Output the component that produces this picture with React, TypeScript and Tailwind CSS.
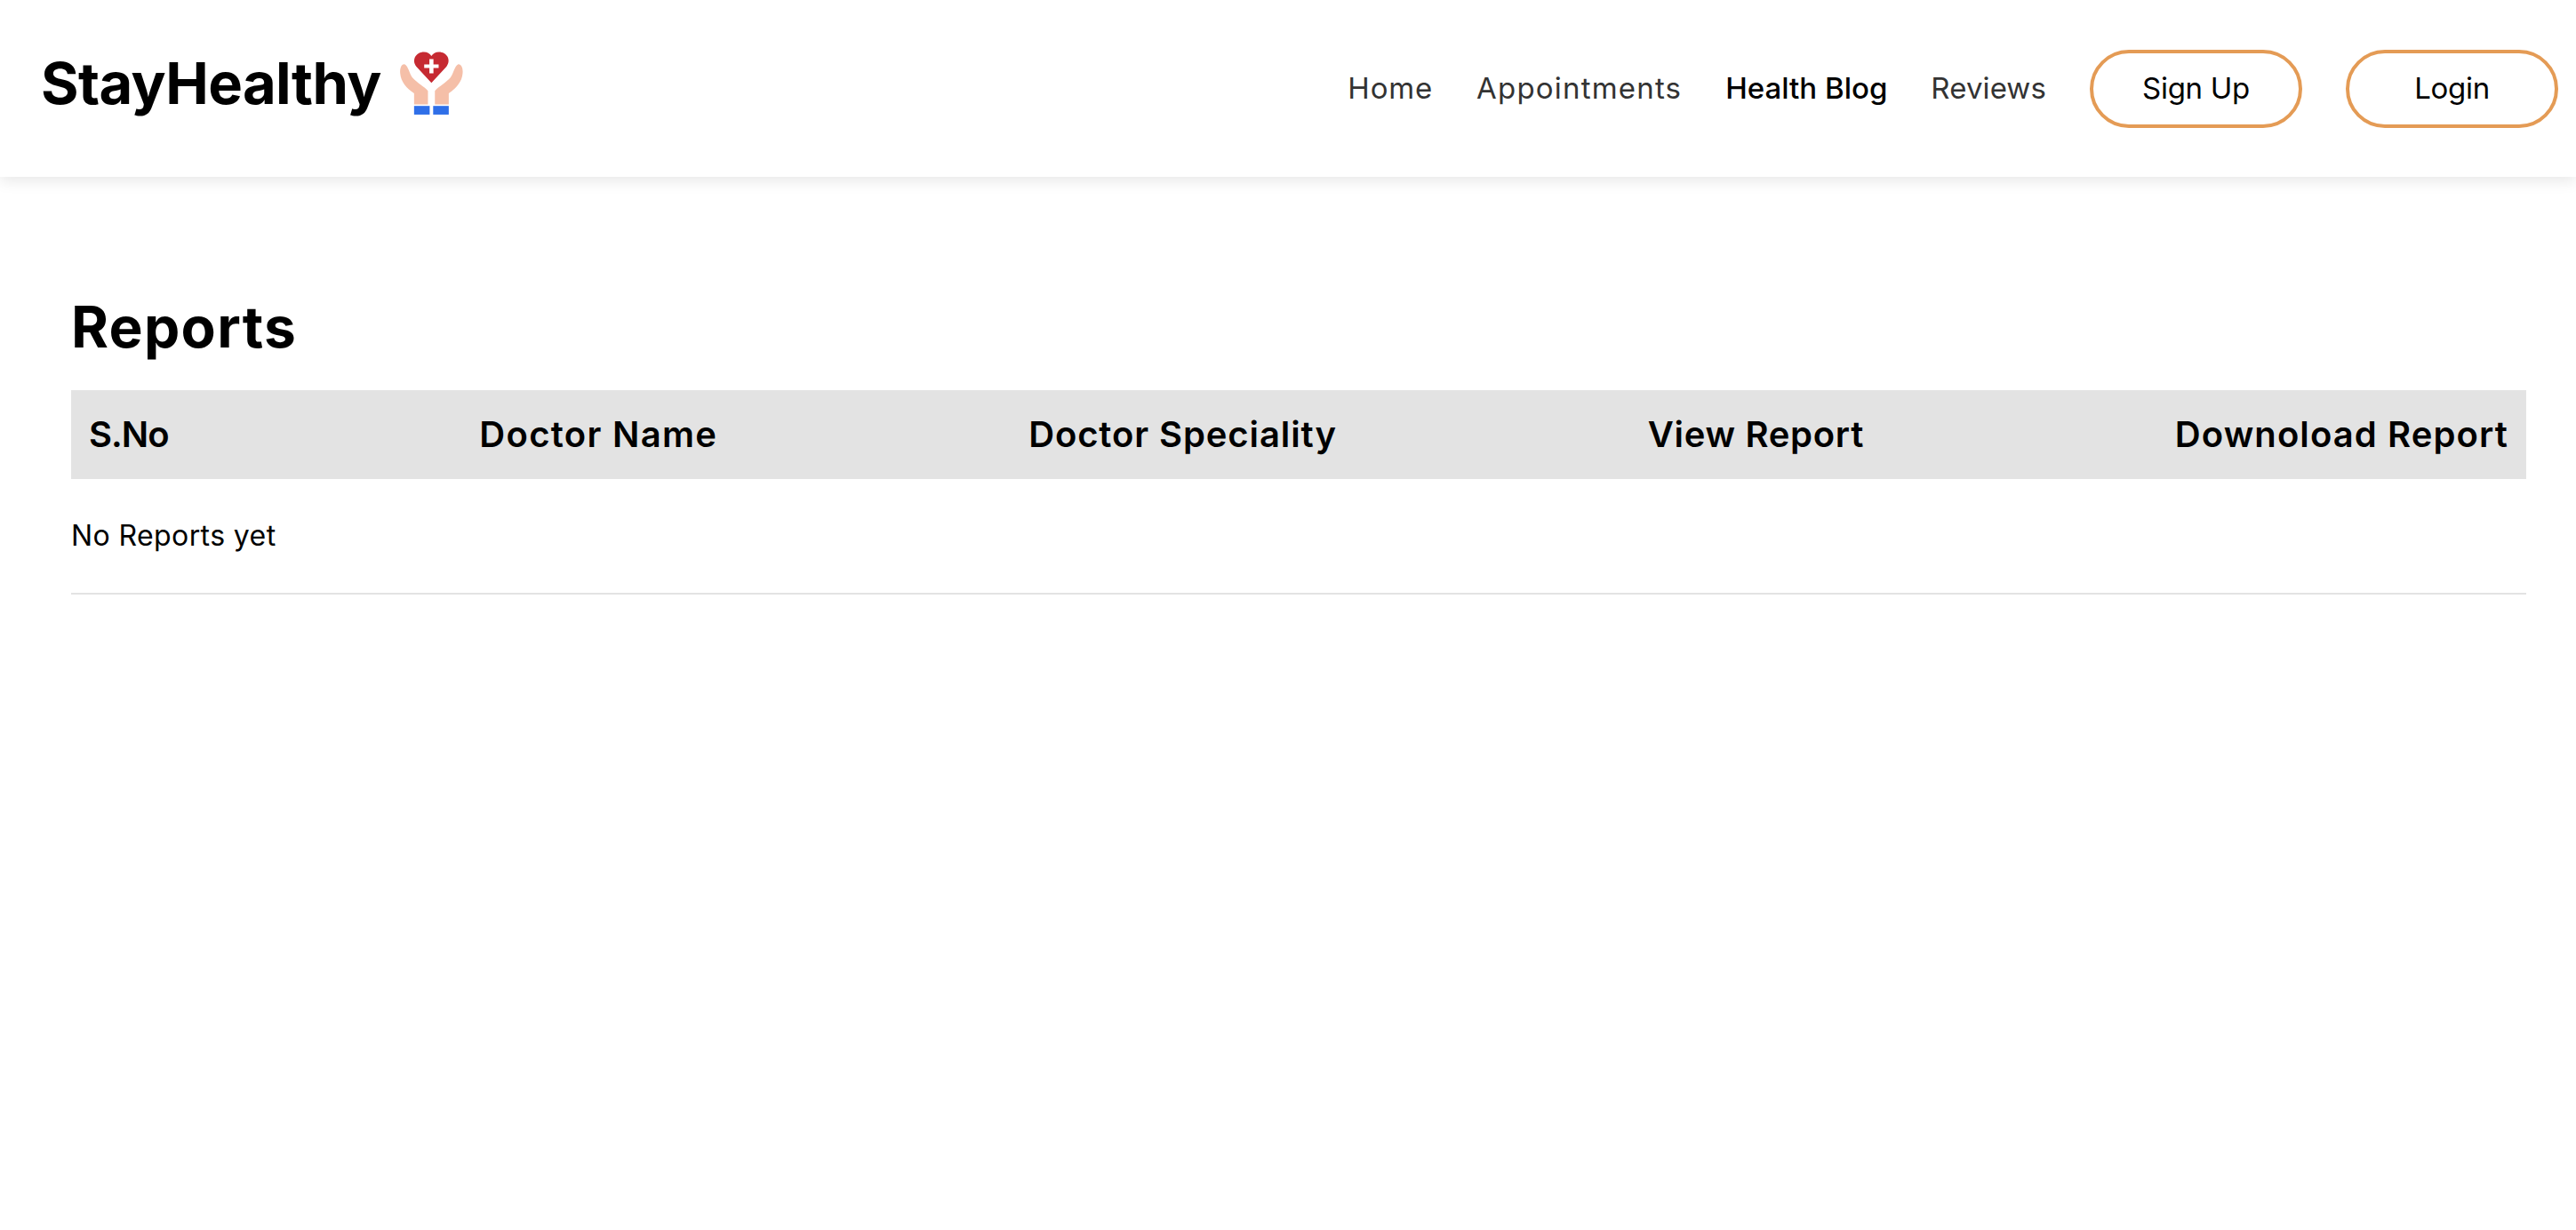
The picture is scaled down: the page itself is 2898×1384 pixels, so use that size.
const font = "font-['Inter',sans-serif]";

function LogoIcon() {
  return (
    <svg viewBox="80 75 240 235" className="w-[78px] h-[78px] blur-[0.5px]">
      <path d="M198 190 L146 134 C128 110 145 83 172 83 C184 83 193 89 198 97 C203 89 212 83 224 83 C251 83 268 110 250 134 Z" fill="#c62a32" />
      <path d="M191 108 h14 v18 h18 v13 h-18 v18 h-14 v-18 h-18 v-13 h18 Z" fill="#fff" />
      <path d="M138 265 L186 265 L186 218 C172 202 150 192 132 172 C122 158 118 132 106 126 C94 124 88 140 90 158 C92 185 112 210 138 226 Z" fill="#f5bfa8" />
      <path d="M258 265 L210 265 L210 218 C224 202 246 192 264 172 C274 158 278 132 290 126 C302 124 308 140 306 158 C304 185 284 210 258 226 Z" fill="#f5bfa8" />
      <rect x="138" y="270" width="54" height="30" fill="#2f6fe8" />
      <rect x="204" y="270" width="54" height="30" fill="#2f6fe8" />
    </svg>
  );
}

export default function App() {
  const columns = [
    { label: 'S.No', cls: 'tracking-[-1px]' },
    { label: 'Doctor Name', cls: 'tracking-[1.3px]' },
    { label: 'Doctor Speciality', cls: 'tracking-[0.9px]' },
    { label: 'View Report', cls: 'tracking-[0.7px]' },
    { label: 'Downoload Report', cls: 'tracking-[1.1px]' },
  ];

  return (
    <div className={`min-h-screen bg-white text-black ${font}`}>
      {/* Navbar */}
      <nav className="h-[199px] flex items-center justify-between pl-[46px] pr-[20px] shadow-[0_4px_16px_rgba(0,0,0,0.1)]">
        <div className="flex items-center gap-[18px] -mt-[12px]">
          <span className="text-[65px] leading-none font-bold tracking-[-0.6px] blur-[0.4px]">StayHealthy</span>
          <LogoIcon />
        </div>
        <div className="flex items-center gap-[49px] text-[33px] text-[#333]">
          <span className="tracking-[0.8px]">Home</span>
          <span className="tracking-[1.2px]">Appointments</span>
          <span className="text-black font-medium">Health Blog</span>
          <span className="tracking-[0.1px]">Reviews</span>
          <button className="w-[239px] h-[88px] rounded-[44px] border-[4px] border-[#e49b55] text-black tracking-[-0.3px]">Sign Up</button>
          <button className="w-[239px] h-[88px] rounded-[44px] border-[4px] border-[#e49b55] text-black tracking-[-0.3px]">Login</button>
        </div>
      </nav>

      {/* Reports */}
      <main className="pl-[80px] pr-[56px] pt-[114px]">
        <h1 className="text-[64px] leading-[110px] font-bold tracking-[1.3px] mb-[16px]">Reports</h1>
        <div className="h-[100px] bg-[#e3e3e3] flex items-center justify-between px-[20px] text-[40px] font-semibold">
          {columns.map((c) => (
            <span key={c.label} className={c.cls}>{c.label}</span>
          ))}
        </div>
        <div className="h-[130px] flex items-center border-b-[2px] border-[#e3e3e3] text-[32px] tracking-[0.4px]">No Reports yet</div>
      </main>
    </div>
  );
}
